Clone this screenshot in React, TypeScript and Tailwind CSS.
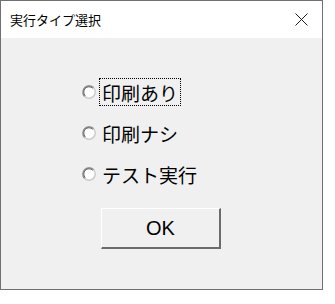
import React from 'react'

const OPTIONS = ['印刷あり', '印刷ナシ', 'テスト実行']

function RadioDot() {
  return (
    <svg width="14" height="14" viewBox="0 0 14 14" className="shrink-0">
      <circle cx="7" cy="7" r="5" fill="#ffffff" />
      <circle cx="7" cy="7" r="6.3" fill="none" stroke="#c8c8c8" strokeWidth="1.2" />
      <path d="M2.55 11.45 A6.3 6.3 0 0 1 11.45 2.55" fill="none" stroke="#8a8a8a" strokeWidth="1.2" />
      <path d="M3.3 10.7 A5.2 5.2 0 0 1 10.7 3.3" fill="none" stroke="#6a6a6a" strokeWidth="1" />
    </svg>
  )
}

export default function App() {
  return (
    <div
      className="w-[335px] h-[304px] bg-white"
      style={{ fontFamily: '"Noto Sans CJK JP", "Noto Sans", sans-serif' }}
    >
      <div className="w-[323px] h-[290px] border border-[#707070] flex flex-col bg-[#f0f0f0]">
        {/* Title bar */}
        <div className="h-[37px] bg-white flex items-center justify-between pl-[9px] pr-[14px]">
          <span className="text-[13px] text-black leading-none">実行タイプ選択</span>
          <svg width="13" height="13" viewBox="0 0 13 13">
            <path d="M0.5 0.5 L12.5 12.5 M12.5 0.5 L0.5 12.5" stroke="#1a1a1a" strokeWidth="1" />
          </svg>
        </div>

        {/* Body */}
        <div className="flex flex-col pt-[40px]">
          <div className="flex flex-col gap-[13px] pl-[81px]">
            {OPTIONS.map((o, i) => (
              <div key={o} className="h-[28px] flex items-center gap-[3px]">
                <RadioDot />
                <span
                  className={`h-[28px] flex items-center px-[2px] text-[19px] text-black leading-none border border-dotted ${
                    i === 0 ? 'border-black' : 'border-transparent'
                  }`}
                >
                  {o}
                </span>
              </div>
            ))}
          </div>

          {/* OK button */}
          <div className="mt-[20px] pl-[100px]">
            <div className="w-[120px] h-[41px] border-t border-l border-white border-b-2 border-r-2 border-b-[#6b6b6b] border-r-[#6b6b6b] bg-[#f0f0f0] flex items-center justify-center">
              <span
                className="text-[20px] text-black leading-none"
                style={{ fontFamily: '"Liberation Sans", Arial, sans-serif' }}
              >
                OK
              </span>
            </div>
          </div>
        </div>
      </div>
    </div>
  )
}
